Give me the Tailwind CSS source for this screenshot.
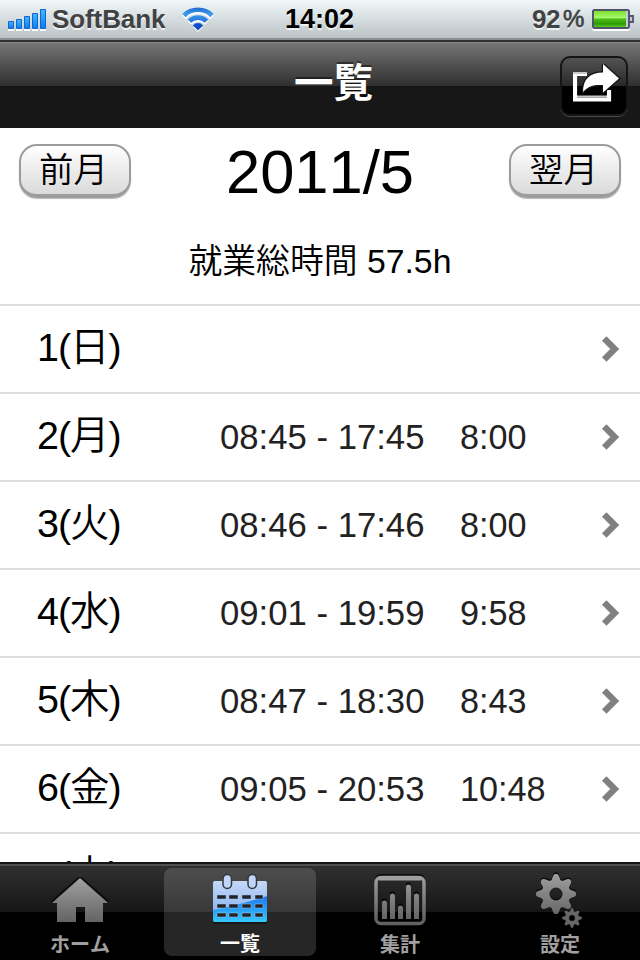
<!DOCTYPE html>
<html lang="ja">
<head>
<meta charset="utf-8">
<title>一覧</title>
<script src="https://cdn.jsdelivr.net/npm/@tailwindcss/browser@4"></script>
</head>
<body class="bg-white font-['Liberation_Sans','Noto_Sans_CJK_JP',sans-serif] text-black">
<div class="w-[640px] h-[960px] flex flex-col overflow-hidden [font-kerning:none]">
  <header class="h-10 shrink-0 relative flex items-center bg-linear-to-b from-[#f1f8fa] to-[#bcc3c6] border-b-2 border-[#899196] [text-shadow:0_2px_0_#ffffffb0] font-bold text-[26px] leading-[38px]">
    <svg class="ml-2 mt-px w-[38px] h-[22px]" viewBox="0 0 38 22">
      <defs><linearGradient id="sig" x2="0" y2="1"><stop stop-color="#3fbaff"/><stop offset="1" stop-color="#087cf0"/></linearGradient></defs>
      <g fill="#fff"><path d="M0 20h6v2H0zM8 20h6v2H8zM16 20h6v2h-6zM24 20h6v2h-6zM32 20h6v2h-6z"/></g>
      <g fill="url(#sig)" stroke="#1264cf"><path d="M.5 12.500h5v7h-5z"/><path d="M8.500 10.500h5v9h-5z"/><path d="M16.500 7.500h5v12h-5z"/><path d="M24.500 4.500h5v15h-5z"/><path d="M32.500.5h5v19h-5z"/></g>
    </svg>
    <span class="ml-[6px] w-[116px] text-[#404244] tracking-[-0.1px]">SoftBank</span>
    <svg class="ml-[13px] mt-px w-[34px] h-[26px]" viewBox="0 0 34 26">
      <defs><linearGradient id="wf" x2="0" y2="24" gradientUnits="userSpaceOnUse"><stop stop-color="#2264c8"/><stop offset=".3" stop-color="#3c9cf0"/><stop offset="1" stop-color="#0645c8"/></linearGradient></defs>
      <g fill="none" stroke="#fff" stroke-width="4.600" transform="translate(0 2)"><path d="M3 8.500a20 20 0 0 1 28 0M8.500 14a12 12 0 0 1 17 0"/><path d="M17 23l-4.500-4.500a6.400 6.400 0 0 1 9 0z" fill="#fff" stroke="none"/></g>
      <g fill="none" stroke="url(#wf)" stroke-width="4.600"><path d="M3 8.500a20 20 0 0 1 28 0M8.500 14.200a12 12 0 0 1 17 0"/><path d="M17 23.500l-5-5a6.400 6.400 0 0 1 10 0z" fill="#0b4fcc" stroke="none"/></g>
    </svg>
    <span class="ml-[70px] w-[72px] text-[27px]">14:02</span>
    <span class="ml-[175px] w-[31px] text-[#404244] tracking-[-0.4px]">92</span>
    <span class="w-[29px] text-[#404244] text-[24px] font-normal [-webkit-text-stroke:0.7px_#404244]">%</span>
    <svg class="w-[42px] h-[22px] mt-[2px]" viewBox="0 0 42 22">
      <defs><linearGradient id="bt" x2="0" y2="1"><stop stop-color="#7be02c"/><stop offset=".42" stop-color="#aaf96e"/><stop offset=".5" stop-color="#4fc016"/><stop offset=".8" stop-color="#2c9a05"/><stop offset="1" stop-color="#58c81c"/></linearGradient></defs>
      <rect x="1" y="2" width="36" height="19" rx="1.500" fill="none" stroke="#fff" stroke-width="2"/>
      <rect x="1" y="1" width="36" height="18" rx="1.500" fill="#c9ccd6" stroke="#50546f" stroke-width="2"/>
      <rect x="2" y="2" width="32" height="16" fill="url(#bt)"/>
      <path d="M38 7h3v6h-3" fill="#c9ccd6" stroke="#50546f" stroke-width="1.800"/>
    </svg>
  </header>

  <nav class="h-[88px] shrink-0 relative flex items-center justify-center border-t-2 border-[#2d2f32] bg-[linear-gradient(to_bottom,#878787_0,#737373_2px,#2f2f2f_44px,#171717_44px,#171717_100%)]">
    <h1 class="text-[39.5px] leading-[48px] font-bold text-white [text-shadow:0_-2px_0_#00000070] mt-[-4px] ml-[27px]">一覧</h1>
    <button class="absolute left-[560px] top-[14px] w-[68px] h-[60px] rounded-[10px] border-2 border-[#151515] bg-[linear-gradient(to_bottom,#535353_0,#272727_28px,#000_28px,#000_100%)] shadow-[0_1px_0_#4a4a4a]">
      <svg class="absolute left-[11px] top-[6px] w-[48px] h-[40px]" viewBox="0 0 48 40">
        <path d="M14 10H2v25.500h34V26" fill="none" stroke="#fff" stroke-width="4.200"/>
        <path d="M4 31.500h30v2H4zM0 8h14v2H0z" fill="#c9c9c9"/>
        <path d="M10 28C10 15 17 8.500 30 8.500V0l16 14.500L30 28.500V21c-9-.5-15 1-20 7z" fill="#fff" stroke="#151515" stroke-width="2.500" paint-order="stroke"/>
      </svg>
    </button>
  </nav>

  <main class="h-[734px] shrink-0 overflow-hidden">
    <section class="h-[178px] border-b-2 border-[#dedede] pt-4">
      <div class="flex justify-between items-start px-[19px]">
        <button class="w-[112px] h-[54px] rounded-[18px] border-2 border-b-4 border-[#9c9c9c] bg-linear-to-b from-white to-[#dadada] text-[34.5px] leading-[48px] font-[350] shadow-[0_1px_1px_#bbb] pr-[3px]">前月</button>
        <div class="text-[61.5px] leading-[56px]">2011/5</div>
        <button class="w-[112px] h-[54px] rounded-[18px] border-2 border-b-4 border-[#9c9c9c] bg-linear-to-b from-white to-[#dadada] text-[34.5px] leading-[48px] font-[350] shadow-[0_1px_1px_#bbb] pr-[3px]">翌月</button>
      </div>
      <p class="mt-[41px] text-center text-[33.8px] leading-[40px] font-[350]">就業総時間 57.5h</p>
    </section>
    <ul id="days"></ul>
  </main>

  <footer class="h-[98px] shrink-0 border-t-2 border-[#151515] bg-[linear-gradient(to_bottom,#505050_0,#505050_2px,#303030_2px,#161616_48px,#000_48px)] grid grid-cols-4 text-center text-[#a0a0a0] font-bold text-[20px] leading-6">
    <a class="relative flex flex-col items-center pt-[13px]">
      <svg class="w-[58px] h-[46px]" viewBox="0 0 58 46"><defs><linearGradient id="gr" x2="0" y2="46" gradientUnits="userSpaceOnUse"><stop stop-color="#a2a2a2"/><stop offset="1" stop-color="#626262"/></linearGradient></defs>
        <path d="M29 0L0 25h6M29 0l29 25" fill="none" stroke="#0d0d0d" stroke-width="2"/>
        <path d="M29 1L57 26H52v19H34V30h-9v15H6V26H1z" fill="url(#gr)"/></svg>
      <span class="mt-[10px]">ホーム</span>
    </a>
    <a class="relative flex flex-col items-center text-white m-1 rounded-lg bg-white/15 pt-[5px]">
      <svg class="w-[56px] h-[52px] shrink-0" viewBox="0 0 56 52">
        <defs><linearGradient id="c1" x2="0" y2="1"><stop stop-color="#c5d8f8"/><stop offset="1" stop-color="#79aaf0"/></linearGradient><linearGradient id="c2" x2="0" y2="1"><stop stop-color="#1c78ef"/><stop offset="1" stop-color="#34c7fd"/></linearGradient></defs>
        <rect x="1" y="9" width="54" height="42" rx="2" fill="#0006"/>
        <rect x="1" y="8" width="54" height="41" rx="2" fill="url(#c1)"/>
        <path d="M1 37Q28 32 55 23v24q0 2-2 2H3q-2 0-2-2z" fill="url(#c2)"/>
        <g fill="#202428" stroke="#b0c9ef99" stroke-width=".8"><path id="r" d="M5 22h9v4H5zM17 22h9v4h-9zM30 22h9v4h-9zM43 22h8v4h-8z"/><use href="#r" y="9"/><use href="#r" y="18"/></g>
        <g fill="#c0d5f8" stroke="#36393d" stroke-width="1.500"><rect x="11" y="1.500" width="8.500" height="14" rx="4.200"/><rect x="36" y="1.500" width="8.500" height="14" rx="4.200"/></g>
      </svg>
      <span class="mt-[7px] mb-[-2px]">一覧</span>
    </a>
    <a class="relative flex flex-col items-center pt-[10px]">
      <svg class="w-[52px] h-[52px]" viewBox="0 0 52 52">
        <rect x="1.500" y="1" width="49" height="48" rx="6" fill="none" stroke="#0a0a0a" stroke-width="2"/>
        <rect x="2" y="3.500" width="48" height="46" rx="5" fill="none" stroke="url(#gr)" stroke-width="3.500"/>
        <path d="M5 3h42v3.500H5z" fill="#a0a0a0"/>
        <g stroke="#050505" stroke-width="5" stroke-linecap="round"><path d="M10.500 27v5M18.500 20v5M26.500 32v4M34.500 11v5M42.500 20v5"/></g>
        <g fill="url(#gr)"><path d="M8 45V29a2.500 2.500 0 0 1 5 0v16zM16 45V22a2.500 2.500 0 0 1 5 0v23zM24 45V34a2.500 2.500 0 0 1 5 0v11zM32 45V13a2.500 2.500 0 0 1 5 0v32zM40 45V22a2.500 2.500 0 0 1 5 0v23z"/></g>
      </svg>
      <span class="mt-[7px]">集計</span>
    </a>
    <a class="relative flex flex-col items-center pt-[8px]">
      <svg class="w-[48px] h-[56px]" viewBox="0 0 48 56" id="gears"></svg>
      <span class="mt-[5px]">設定</span>
    </a>
  </footer>
</div>
<script>
const days = [['1','日'],['2','月','08:45 - 17:45','8:00'],['3','火','08:46 - 17:46','8:00'],['4','水','09:01 - 19:59','9:58'],['5','木','08:47 - 18:30','8:43'],['6','金','09:05 - 20:53','10:48'],['7','土']];
document.getElementById('days').innerHTML = days.map(([d, w, t = '', h = '']) => `
  <li class="h-[88px] border-b-2 border-[#dedede] flex items-center pl-[37px] pr-5">
    <span class="w-[183px] text-[39.5px] leading-[44px] tracking-[-1px] font-[350] mt-[-4px]">${d}(${w})</span>
    <span class="w-[240px] text-[34.7px] leading-[44px] text-[#222] whitespace-pre">${t}</span>
    <span class="text-[34.2px] leading-[44px] text-[#222]">${h}</span>
    <svg class="ml-auto w-[20px] h-[28px]" viewBox="0 0 20 28"><path d="M4.200 3.600L14.700 14 4.200 24.400" fill="none" stroke="#808080" stroke-width="6.400"/></svg>
  </li>`).join('');

// Closed outline of an eight-toothed gear with a round hole.
function gear(cx, cy, outer, inner, hole) {
  const pts = [];
  for (let i = 0; i < 96; i++) {
    const a = i / 96 * 2 * Math.PI;
    const k = Math.max(-1, Math.min(1, 1.3 * Math.cos(8 * a)));
    const r = (outer + inner) / 2 + (outer - inner) / 2 * k;
    pts.push((cx + r * Math.sin(a)).toFixed(2) + ' ' + (cy - r * Math.cos(a)).toFixed(2));
  }
  return `M${pts.join('L')}ZM${cx - hole} ${cy}a${hole} ${hole} 0 1 0 ${2 * hole} 0a${hole} ${hole} 0 1 0 ${-2 * hole} 0Z`;
}
const big = gear(20, 22, 20, 14.5, 6.5), small = gear(36, 46, 10, 7, 2.8);
document.getElementById('gears').innerHTML = `<path d="${big}" transform="translate(0 -1.5)" fill="#0b0b0b"/><path d="${big}" fill="url(#gr)" fill-rule="evenodd"/><path d="${small}" fill="#686868" stroke="#111" stroke-width=".5" fill-rule="evenodd"/>`;
</script>
</body>
</html>
